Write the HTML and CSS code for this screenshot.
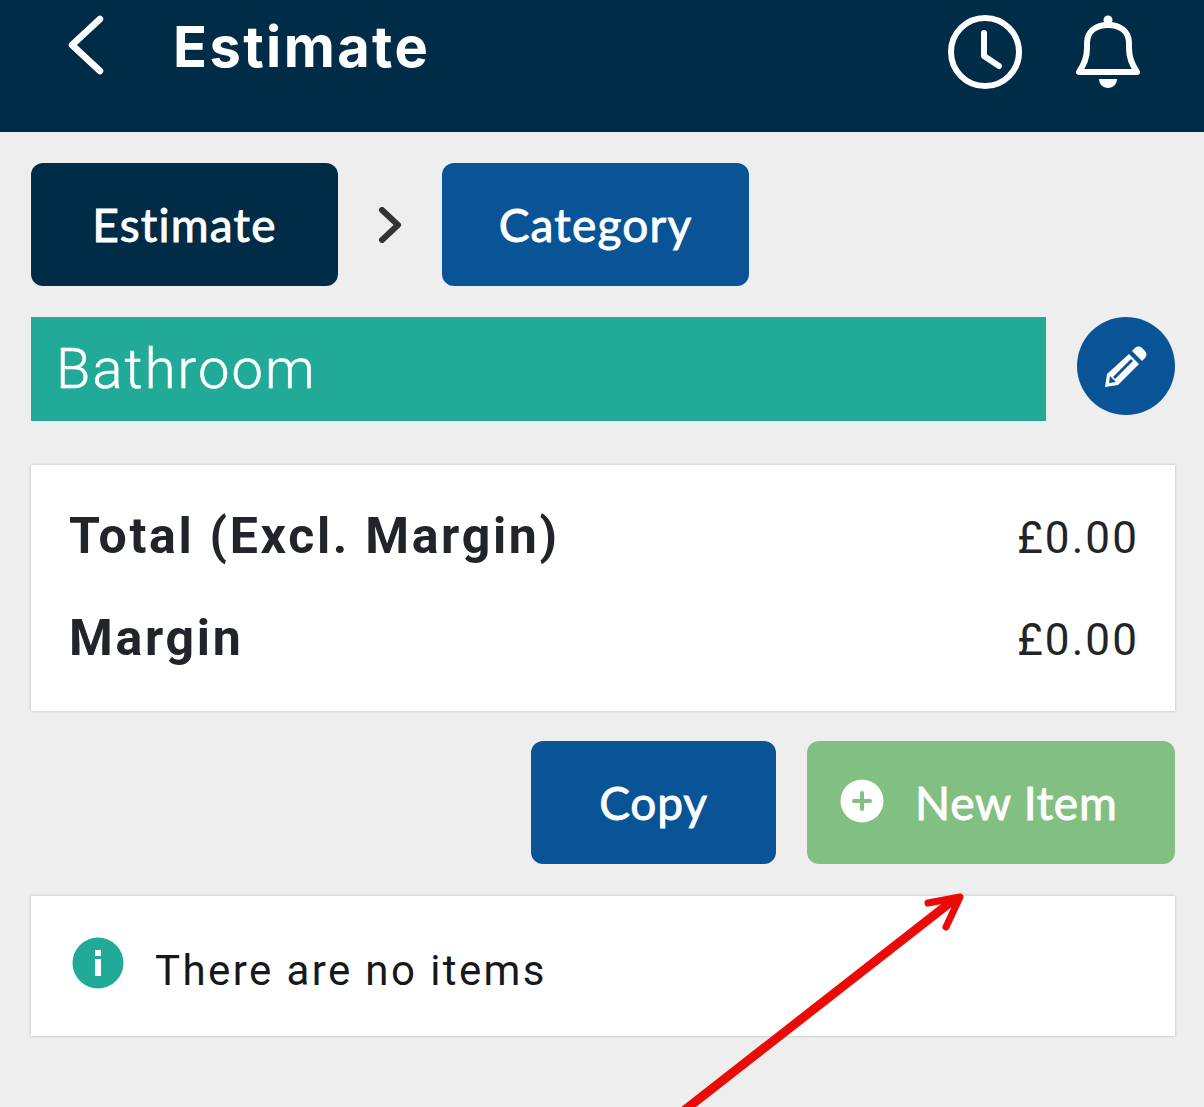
FILE: index.html
```html
<!DOCTYPE html>
<html lang="en">
<head>
  <meta charset="UTF-8" />
  <meta name="viewport" content="width=device-width, initial-scale=1" />
  <title>Estimate</title>
  <link rel="stylesheet" href="styles.css">
</head>
<body>
  <header class="topbar">
    <svg class="back-icon" viewBox="0 0 40 62" width="40" height="62">
      <path d="M33 4 L5 30 L33 56" />
    </svg>
    <div class="topbar-title">Estimate</div>
    <svg class="clock-icon" viewBox="0 0 76 76" width="76" height="76">
      <circle cx="38" cy="38" r="34" />
      <path d="M37 19 V42 L52 52" />
    </svg>
    <svg class="bell-icon" viewBox="0 0 68 76" width="68" height="76">
      <path class="bell-line" d="M5 59 H63 C58 51 55 45 55 35 V30 C55 18 46 12 34 12 C22 12 13 18 13 30 V35 C13 45 10 51 5 59 Z" />
      <circle class="bell-fill" cx="34" cy="7" r="4.5" />
      <rect class="bell-fill" x="31" y="7" width="6" height="6" />
      <path class="bell-fill" d="M25 66 H43 C43 71 39 75 34 75 C29 75 25 71 25 66 Z" />
    </svg>
  </header>

  <main class="content">
    <nav class="steps">
      <div class="step step-dark">Estimate</div>
      <svg class="step-arrow" viewBox="0 0 24 36" width="24" height="36">
        <path d="M4 3 L20 18 L4 33" />
      </svg>
      <div class="step step-blue">Category</div>
    </nav>

    <div class="title-row">
      <div class="banner">Bathroom</div>
      <div class="edit-btn">
        <svg viewBox="0 0 44 44" width="44" height="44">
          <path class="pencil-tip" d="M31 4 C33 2 36 2 38 4 L41 7 C43 9 43 12 41 14 L38 17 L28 7 Z" />
          <path class="pencil-body" d="M25 10 L35 20 L14 41 L1 43 L3 30 Z M27 15 L9 33 L11 35 L29 17 Z M6 32 L5 39 L12 38 Z" />
        </svg>
      </div>
    </div>

    <section class="card totals">
      <div class="total-row total-first">
        <span class="total-label">Total (Excl. Margin)</span>
        <span class="total-value">£0.00</span>
      </div>
      <div class="total-row">
        <span class="total-label">Margin</span>
        <span class="total-value">£0.00</span>
      </div>
    </section>

    <div class="actions">
      <div class="btn btn-copy">Copy</div>
      <div class="btn btn-new">
        <svg class="plus-icon" viewBox="0 0 44 44" width="44" height="44">
          <circle cx="22" cy="22" r="21.5" />
          <path d="M22 14 V30 M14 22 H30" />
        </svg>
        <span>New Item</span>
      </div>
    </div>

    <section class="card notice">
      <svg class="info-icon" viewBox="0 0 52 52" width="52" height="52">
        <circle cx="26" cy="26" r="25.5" />
        <rect x="23" y="13" width="6" height="6" />
        <rect x="23" y="22" width="6" height="17" />
      </svg>
      <span class="notice-text">There are no items</span>
    </section>
  </main>

  <!-- annotation drawn over the screenshot -->
  <svg class="callout" viewBox="0 0 1204 1107" width="1204" height="1107">
    <path class="callout-line" d="M672 1120 L956 898" />
    <path d="M928 903 L960 897 L946 927" />
  </svg>
</body>
</html>
```

FILE: styles.css
```css
html, body {
  margin: 0;
  padding: 0;
}
body {
  position: relative;
  height: 1107px;
  overflow: hidden;
  background: #eeeeee;
  font-family: "Lato", sans-serif;
}
.topbar {
  display: flex;
  align-items: flex-start;
  height: 132px;
  background: #002c47;
  color: #fff;
}
.back-icon {
  margin: 15px 0 0 67px;
}
.back-icon path {
  fill: none;
  stroke: #fff;
  stroke-width: 6.5;
  stroke-linecap: round;
  stroke-linejoin: round;
}
.topbar-title {
  margin: 13px 0 0 66px;
  flex: 1;
  font-family: "Inter", sans-serif;
  font-size: 56px;
  line-height: 68px;
  font-weight: 700;
  letter-spacing: 2.4px;
}
.clock-icon {
  margin: 14px 0 0 0;
}
.clock-icon circle,
.clock-icon path {
  fill: none;
  stroke: #fff;
  stroke-width: 6;
  stroke-linecap: round;
  stroke-linejoin: round;
}
.bell-icon {
  margin: 13px 62px 0 51px;
}
.bell-line {
  fill: none;
  stroke: #fff;
  stroke-width: 6;
  stroke-linejoin: round;
}
.bell-fill {
  fill: #fff;
}
.content {
  display: flex;
  flex-direction: column;
  padding: 31px 29px 0 31px;
}
.steps {
  display: flex;
  align-items: center;
}
.step {
  width: 307px;
  height: 123px;
  display: flex;
  align-items: center;
  justify-content: center;
  border-radius: 12px;
  color: #fff;
  font-size: 46px;
  letter-spacing: 1.2px;
  -webkit-text-stroke: 0.9px #fff;
}
.step-dark {
  background: #002c47;
}
.step-blue {
  background: #085497;
}
.step-arrow {
  margin: 0 40px;
}
.step-arrow path {
  fill: none;
  stroke: #333;
  stroke-width: 6;
  stroke-linecap: round;
  stroke-linejoin: round;
}
.title-row {
  display: flex;
  align-items: flex-start;
  justify-content: space-between;
  margin-top: 31px;
}
.banner {
  width: 990px;
  height: 104px;
  padding-left: 25px;
  background: #22aa98;
  color: #fff;
  font-family: "Roboto", sans-serif;
  font-size: 56px;
  font-weight: 300;
  letter-spacing: 2.1px;
  line-height: 104px;
  -webkit-text-stroke: 0.5px #fff;
}
.edit-btn {
  width: 98px;
  height: 98px;
  display: flex;
  align-items: center;
  justify-content: center;
  border-radius: 50%;
  background: #085497;
}
.pencil-tip {
  fill: #fff;
}
.pencil-body {
  fill: #fff;
  fill-rule: evenodd;
}
.card {
  background: #fff;
  box-shadow: 0 0 3px rgba(0, 0, 0, 0.22);
}
.totals {
  margin-top: 44px;
  height: 246px;
  padding: 20px 36px 0 38px;
  box-sizing: border-box;
}
.total-row {
  display: flex;
  justify-content: space-between;
  align-items: center;
  height: 102px;
  font-family: "Roboto", sans-serif;
  color: #212529;
}
.total-label {
  font-size: 50px;
  font-weight: 700;
  letter-spacing: 2.7px;
}
.total-value {
  position: relative;
  top: 2px;
  font-size: 44px;
  font-weight: 400;
  letter-spacing: 2.1px;
}
.actions {
  display: flex;
  justify-content: flex-end;
  gap: 31px;
  margin-top: 30px;
}
.btn {
  height: 123px;
  display: flex;
  align-items: center;
  border-radius: 12px;
  color: #fff;
  font-size: 46px;
  letter-spacing: 0.8px;
  -webkit-text-stroke: 0.9px #fff;
  box-sizing: border-box;
}
.btn-copy {
  width: 245px;
  justify-content: center;
  background: #085497;
}
.btn-new {
  width: 368px;
  padding-left: 33px;
  background: #82bf83;
}
.plus-icon {
  margin-right: 31px;
  position: relative;
  top: -2px;
}
.plus-icon circle {
  fill: #fff;
}
.plus-icon path {
  fill: none;
  stroke: #82bf83;
  stroke-width: 4;
  stroke-linecap: round;
}
.notice {
  display: flex;
  align-items: center;
  margin-top: 32px;
  height: 140px;
  padding-left: 41px;
}
.info-icon {
  margin-top: -6px;
}
.info-icon circle {
  fill: #22aa98;
}
.info-icon rect {
  fill: #fff;
}
.notice-text {
  position: relative;
  top: 4px;
  margin-left: 31px;
  font-family: "Roboto", sans-serif;
  font-size: 42px;
  letter-spacing: 2.4px;
  color: #16191c;
}
.callout {
  position: absolute;
  top: 0;
  left: 0;
}
.callout path {
  fill: none;
  stroke: #ea0a06;
  stroke-width: 7;
  stroke-linecap: round;
  stroke-linejoin: round;
}
.callout .callout-line {
  stroke-width: 9;
  stroke-linecap: butt;
}
```
